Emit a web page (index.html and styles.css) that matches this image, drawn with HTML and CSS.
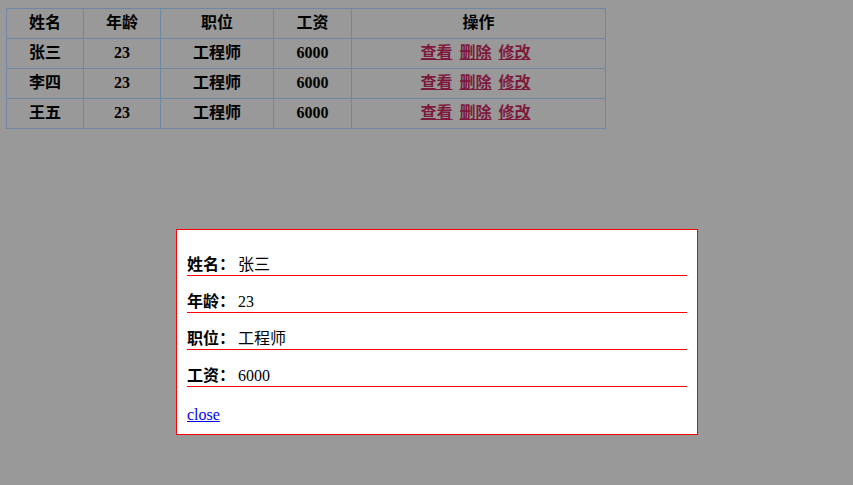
FILE: index.html
```html
<!DOCTYPE html>
<html lang="zh">
<head>
    <meta charset="UTF-8">
    <title>员工列表</title>
    <link rel="stylesheet" href="styles.css">
</head>
<body>

    <table class="staff">
        <colgroup>
            <col class="col-name">
            <col class="col-age">
            <col class="col-job">
            <col class="col-pay">
            <col>
        </colgroup>
        <tr>
            <td>姓名</td>
            <td>年龄</td>
            <td>职位</td>
            <td>工资</td>
            <td>操作</td>
        </tr>
        <tr>
            <td>张三</td>
            <td>23</td>
            <td>工程师</td>
            <td>6000</td>
            <td class="ops"><a href="#">查看</a> <a href="#">删除</a> <a href="#">修改</a></td>
        </tr>
        <tr>
            <td>李四</td>
            <td>23</td>
            <td>工程师</td>
            <td>6000</td>
            <td class="ops"><a href="#">查看</a> <a href="#">删除</a> <a href="#">修改</a></td>
        </tr>
        <tr>
            <td>王五</td>
            <td>23</td>
            <td>工程师</td>
            <td>6000</td>
            <td class="ops"><a href="#">查看</a> <a href="#">删除</a> <a href="#">修改</a></td>
        </tr>
    </table>

    <div class="detail">
        <p><strong>姓名：</strong>张三</p>
        <p><strong>年龄：</strong>23</p>
        <p><strong>职位：</strong>工程师</p>
        <p><strong>工资：</strong>6000</p>
        <p class="close"><a href="#">close</a></p>
    </div>

</body>
</html>
```

FILE: styles.css
```css
body {
    margin: 8px 6px;
    background-color: #999;
    font-family: "Liberation Serif", "Noto Sans CJK SC", serif;
    font-size: 16px;
    color: #000;
}
.staff {
    width: 600px;
    table-layout: fixed;
    border-collapse: collapse;
    border: 1px solid #6f87a3;
}
.staff td {
    height: 27px;
    padding: 0 0 2px;
    border: 1px solid #6f87a3;
    text-align: center;
    font-weight: bold;
    line-height: 20px;
}
.col-name, .col-age {
    width: 77px;
}
.col-job {
    width: 113px;
}
.col-pay {
    width: 78px;
}
.staff .ops {
    word-spacing: 3px;
    padding-right: 6px;
}
.staff a {
    color: #7d1a3c;
}
.detail {
    position: absolute;
    left: 176px;
    top: 229px;
    width: 500px;
    padding: 25px 10px 9px;
    background-color: #fff;
    border: 1px solid #f00;
}
.detail p {
    height: 20px;
    margin: 0 0 16px;
    line-height: 20px;
    border-bottom: 1px solid #f00;
}
.detail strong {
    margin-right: 3px;
}
.detail p.close {
    margin: 0;
    padding-top: 2px;
    border-bottom: none;
}
.detail a {
    color: #00e;
}
```
